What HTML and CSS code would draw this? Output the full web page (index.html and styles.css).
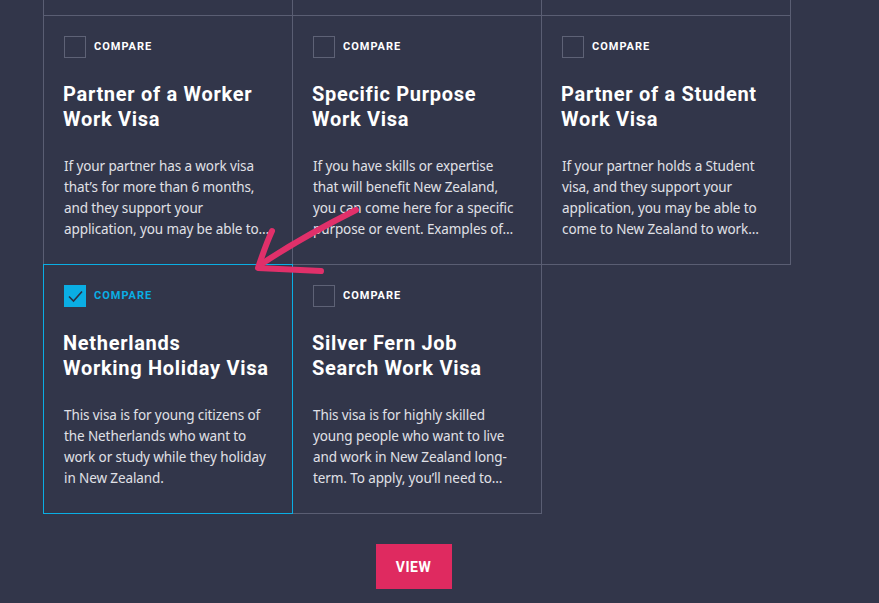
FILE: index.html
```html
<!DOCTYPE html>
<html>
<head>
<meta charset="utf-8">
<link rel="stylesheet" href="styles.css">
</head>
<body>
<div class="page">
  <div class="grid">
    <div class="cell stub"></div>
    <div class="cell stub"></div>
    <div class="cell stub"></div>

    <div class="cell">
      <label class="compare"><span class="box"></span><span class="label">COMPARE</span></label>
      <h3 class="title">Partner of a Worker<br>Work Visa</h3>
      <p class="desc">If your partner has a work visa that’s for more than 6 months, and they support your application, you may be able to…</p>
    </div>
    <div class="cell">
      <label class="compare"><span class="box"></span><span class="label">COMPARE</span></label>
      <h3 class="title">Specific Purpose<br>Work Visa</h3>
      <p class="desc">If you have skills or expertise that will benefit New Zealand, you can come here for a specific purpose or event. Examples of…</p>
    </div>
    <div class="cell">
      <label class="compare"><span class="box"></span><span class="label">COMPARE</span></label>
      <h3 class="title">Partner of a Student<br>Work Visa</h3>
      <p class="desc">If your partner holds a Student visa, and they support your application, you may be able to come to New Zealand to work…</p>
    </div>

    <div class="cell selected">
      <label class="compare"><span class="box checked"><svg viewBox="0 0 22 22" width="22" height="22"><path d="M5 11.5 L9.5 16 L18 6.5" fill="none" stroke="#2b3044" stroke-width="1.6"/></svg></span><span class="label">COMPARE</span></label>
      <h3 class="title">Netherlands<br>Working Holiday Visa</h3>
      <p class="desc">This visa is for young citizens of the Netherlands who want to work or study while they holiday in New Zealand.</p>
    </div>
    <div class="cell">
      <label class="compare"><span class="box"></span><span class="label">COMPARE</span></label>
      <h3 class="title">Silver Fern Job<br>Search Work Visa</h3>
      <p class="desc">This visa is for highly skilled young people who want to live and work in New Zealand long-term. To apply, you’ll need to…</p>
    </div>
  </div>
  <div class="actions">
    <button class="view">VIEW</button>
  </div>
  <svg class="arrow" width="879" height="603" viewBox="0 0 879 603">
    <path d="M356 210 C 320 228, 290 245, 260 265" fill="none" stroke="#e0306a" stroke-width="6" stroke-linecap="round"/>
    <path d="M272 231 C 266 244, 262 256, 258 268 C 280 269, 300 270, 321 271" fill="none" stroke="#e0306a" stroke-width="6" stroke-linecap="round" stroke-linejoin="round"/>
  </svg>
</div>
</body>
</html>
```

FILE: styles.css
```css
html, body {
  margin: 0;
  padding: 0;
  background: #32364a;
  height: 100%;
  overflow: hidden;
}
.page {
  position: relative;
  padding-left: 43px;
  width: 836px;
  height: 603px;
}
.grid {
  display: flex;
  flex-wrap: wrap;
  width: 748px;
}
.cell {
  box-sizing: border-box;
  width: 250px;
  height: 250px;
  margin: 0 -1px -1px 0;
  border: 1px solid #5a5e73;
  padding: 20px 22px 20px 20px;
  position: relative;
}
.cell.stub {
  height: 16px;
  border-top: none;
  padding: 0;
}
.cell.selected {
  border-color: #0aaee4;
  z-index: 1;
}
.compare {
  display: flex;
  align-items: center;
  gap: 8px;
  height: 22px;
}
.box {
  box-sizing: border-box;
  width: 22px;
  height: 22px;
  border: 1px solid #5e6276;
  display: block;
}
.box.checked {
  background: #0aaee4;
  border-color: #0aaee4;
}
.box svg {
  display: block;
  margin: -1px;
}
.label {
  font-family: "Roboto", "Liberation Sans", sans-serif;
  font-weight: 700;
  font-size: 11px;
  letter-spacing: 1px;
  color: #ffffff;
  margin-top: -1px;
}
.selected .label {
  color: #0aaee4;
}
.title {
  margin: 24px -20px 0 -1px;
  font-family: "Roboto", "Liberation Sans", sans-serif;
  font-weight: 700;
  font-size: 20px;
  line-height: 25px;
  color: #ffffff;
  letter-spacing: 0.7px;
}
.desc {
  margin: 24px 0 0;
  font-family: "Noto Sans", "Open Sans", sans-serif;
  font-size: 13.5px;
  line-height: 21px;
  color: #e0e1e7;
  letter-spacing: -0.1px;
}
.actions {
  width: 748px;
  display: flex;
  justify-content: center;
  margin-top: 31px;
}
.view {
  width: 76px;
  height: 45px;
  border: none;
  background: #df2a60;
  color: #ffffff;
  font-family: "Roboto", "Liberation Sans", sans-serif;
  font-weight: 700;
  font-size: 14px;
  letter-spacing: 0.5px;
  padding: 0;
  margin-left: -7px;
}
.arrow {
  position: absolute;
  left: 0;
  top: 0;
  pointer-events: none;
  z-index: 2;
}
```
